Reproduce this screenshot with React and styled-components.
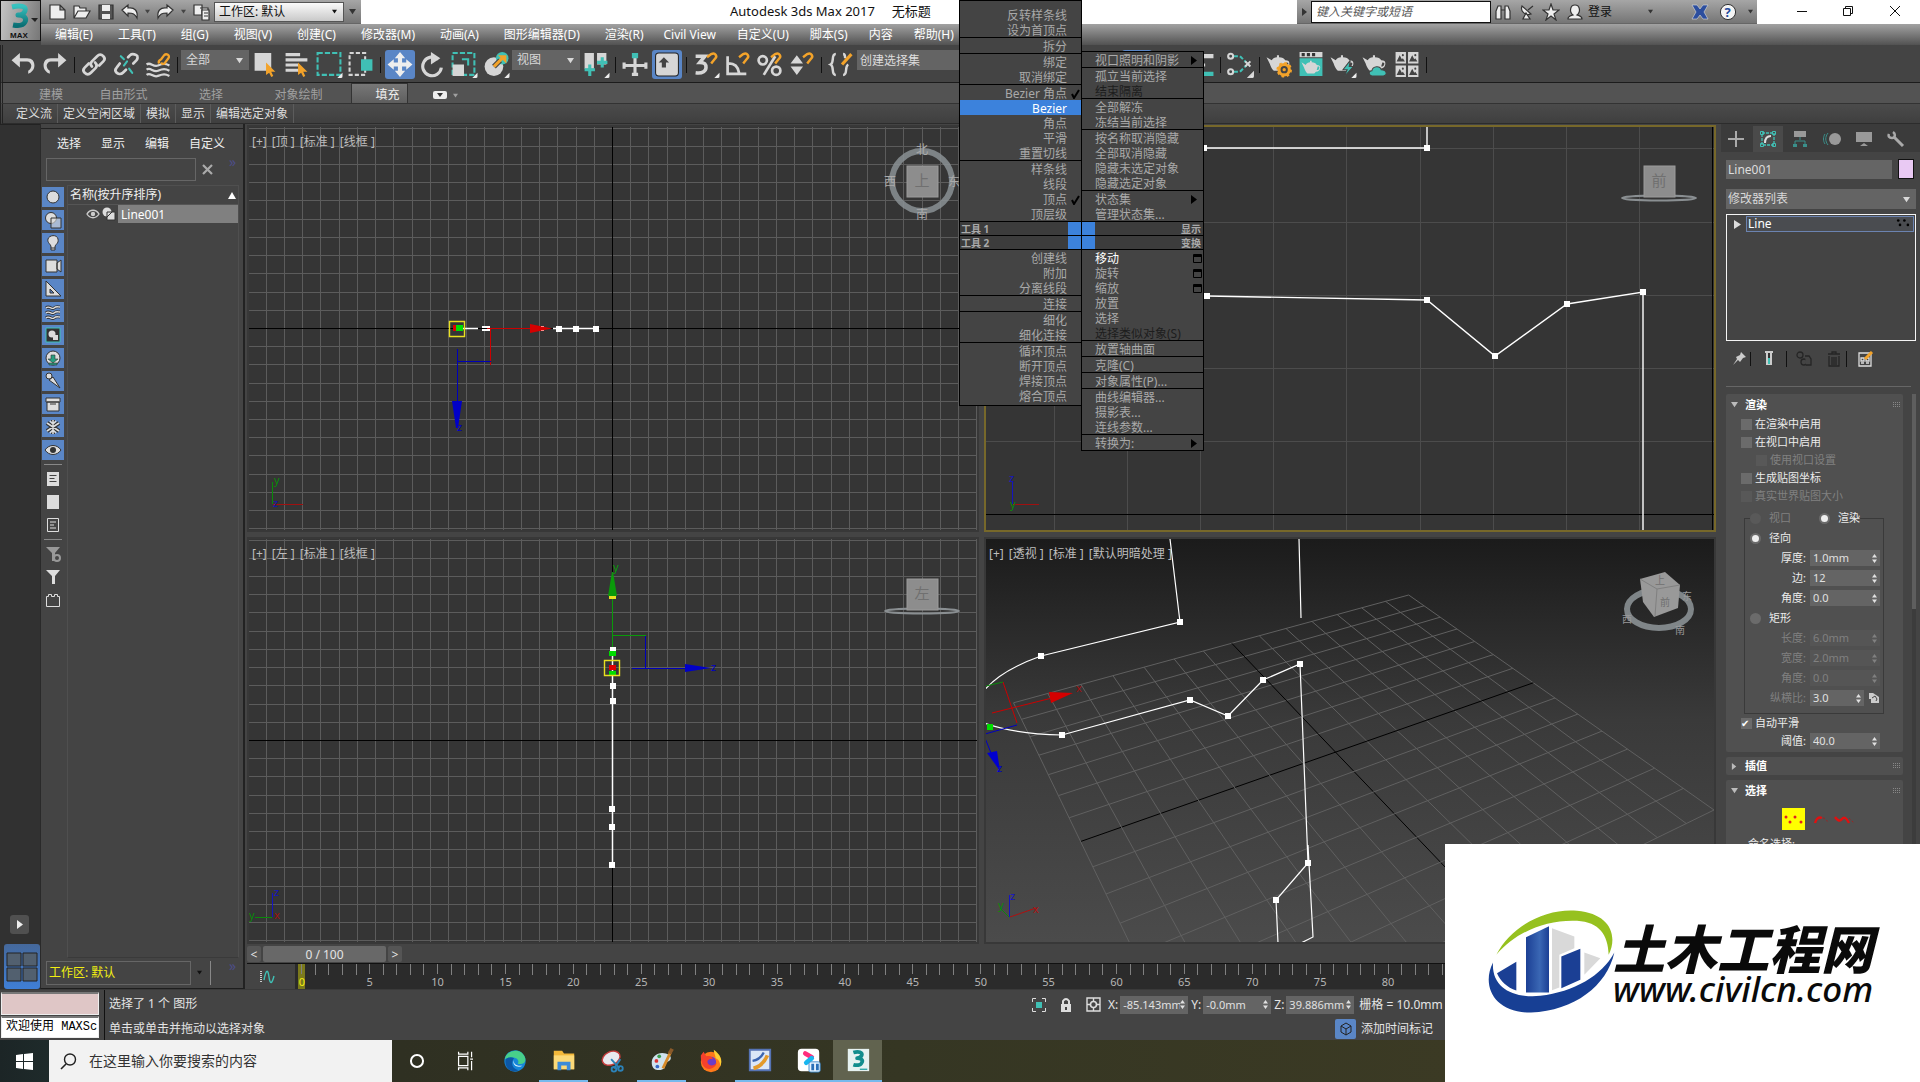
import React, { useState } from 'react';

import styled, { createGlobalStyle } from 'styled-components';

const TEAL = '#40c0b5';
const LIGHT = '#d6d6d6';
const ORANGE = '#f3a32a';
const BLUE = '#5a86c6';

const GlobalStyle = createGlobalStyle`
    * { box-sizing : border-box; }
    body {
        margin : 0;
        background : #444;
        color : #e4e4e4;
        font : 12px/16px "Noto Sans", "Noto Sans CJK SC", sans-serif;
        overflow : hidden;
    }
    button, input, select { font : inherit; color : inherit; margin : 0; padding : 0; border : 0; border-radius : 0; }
    button { background : none; }
    a { color : inherit; text-decoration : none; }
    svg { display : block; flex : none; }
`;

const Page = styled.div`
    display : flex;
    flex-direction : column;
    height : 100vh;
    position : relative;
    overflow : hidden;
`;

/* ---------- icons ---------- */

const teapot = (
    <path fill={LIGHT} d="M1 6l5 3c1-2 3-3 5-3V4h2v2c3 0 5 1 6 3 3 0 4 1 4 3 0 3-2 5-5 5l-2 2H8c-2-2-3-4-4-7zM20 11c0 1-1 3-1 4 2 0 3-1 3-3 0-1-1-1-2-1z" />
);
const magnet = <path fill="none" stroke={ORANGE} strokeWidth="2.4" d="M14 6l4-3c4-2 6 2 4 4l-4 5" />;
const cursor = <path fill={ORANGE} d="M14 11l9 9-4 0 2 4-2 1-2-4-3 2z" />;
const corner = <path fill="#eee" d="M26 21v5h-5z" />;

const ICONS = {
    undo: <path fill={LIGHT} d="M2 9l8-7v5h7c5 0 7 3 7 7s-3 7-6 8v-3c2-1 3-3 3-5s-2-4-4-4h-7v6z" />,
    redo: <path fill={LIGHT} d="M24 9l-8-7v5H9c-5 0-7 3-7 7s3 7 6 8v-3c-2-1-3-3-3-5s2-4 4-4h7v6z" />,
    link: (
        <g fill="none" stroke={LIGHT} strokeWidth="2.6" strokeLinecap="round">
            <path d="M11 15c-2-2-1-4 0-5l5-5c2-2 4-2 6 0s1 4 0 5l-4 4" />
            <path d="M14 11c2 2 2 4 0 6l-4 4c-2 2-4 2-6 0s-1-4 0-5l4-4" />
        </g>
    ),
    unlink: (
        <g fill="none" strokeWidth="2.6" strokeLinecap="round">
            <path stroke={LIGHT} d="M15 6l2-2c2-2 4-1 6 0s1 4 0 5l-3 3M7 12l-3 4c-2 2-1 4 0 5s4 2 6 0l3-3" />
            <path stroke={TEAL} strokeWidth="2" d="M8 5l3 3M16 17l3 4M14 10l-3 4" />
        </g>
    ),
    bind: (
        <g fill="none" strokeWidth="2.2">
            <path stroke={LIGHT} d="M2 13c4-3 6 3 11 1s7-2 11 0M2 18c4-3 6 3 11 1s7-2 11 0M2 23c4-3 6 3 11 1s7-2 11 0" />
            <path stroke={ORANGE} d="M14 12c-1-2 0-3 2-4l3-4c2-2 6 0 4 3l-3 4c-1 2-3 2-4 0" />
        </g>
    ),
    pick: <g><path fill={LIGHT} d="M3 2h16v17H3z" />{cursor}</g>,
    pickName: <g><path fill={LIGHT} d="M2 2h14v3H2zM2 7h21v3H2zM2 12h12v3H2zM2 17h14v3H2z" />{cursor}</g>,
    region: <g><path fill="none" stroke={TEAL} strokeWidth="2" strokeDasharray="5 2" d="M2 2h22v21H2z" />{corner}</g>,
    crossing: (
        <g>
            <path fill="none" stroke={LIGHT} strokeWidth="2" strokeDasharray="4 2" d="M2 2h15v21H2z" />
            <path fill={TEAL} d="M13 8h11v11H13z" />
        </g>
    ),
    move: <path fill="#eee" d="M13 1l5 6h-3v4h4V8l6 5-6 5v-3h-4v4h3l-5 6-5-6h3v-4H7v3l-6-5 6-5v3h4V7H8z" />,
    rotate: <g><path fill="none" stroke={LIGHT} strokeWidth="3" d="M19 8a9 9 0 1 0 3 8" /><path fill={LIGHT} d="M12 1l9 6-9 6z" /></g>,
    scale: (
        <g>
            <path fill="none" stroke={TEAL} strokeWidth="2" strokeDasharray="5 2" d="M2 2h21v21H2z" />
            <path fill={LIGHT} d="M2 13h11v11H2z" />
            <path fill="none" stroke={TEAL} strokeWidth="2" d="M11 8h6v6" />
            {corner}
        </g>
    ),
    place: (
        <g>
            <circle cx="11" cy="15" r="9" fill={LIGHT} />
            <circle cx="19" cy="7" r="6" fill={TEAL} />
            <path stroke="#444" strokeWidth="5" d="M11 15l6-6" />
            <path stroke={ORANGE} strokeWidth="3" d="M11 15l8-8" />
            <path fill={ORANGE} d="M15 4h8v8z" />
            {corner}
        </g>
    ),
    pivot: (
        <g>
            <path fill={LIGHT} d="M2 2h9v15H2zM14 2h9v11h-9z" />
            <path stroke={TEAL} strokeWidth="3" d="M7 13v11M2 18h10M19 6v10M14 11h10" />
            {corner}
        </g>
    ),
    manipulate: (
        <g>
            <path stroke={LIGHT} strokeWidth="3" d="M13 5v18M2 14h22" />
            <path fill={TEAL} d="M10 2h6v5h-6z" />
            <path fill={LIGHT} d="M1 11h3v6H1zM22 11h3v6h-3zM10 21h6v3h-6z" />
        </g>
    ),
    keyboard: (
        <g>
            <rect x="2" y="2" width="22" height="22" rx="3" fill={LIGHT} stroke="#222" />
            <path fill="#444" d="M10 6l5 5h-3v5H8v-5H5z" />
        </g>
    ),
    snap3: <g><path fill="none" stroke={LIGHT} strokeWidth="3.4" d="M3 5h9l-5 6c5 0 6 2 6 5s-3 6-10 5" />{magnet}{corner}</g>,
    snapAngle: <g><path fill="none" stroke={LIGHT} strokeWidth="2.6" d="M3 5v17h18M4 12c6 0 9 3 10 9" />{magnet}</g>,
    snapPercent: (
        <g fill="none" stroke={LIGHT} strokeWidth="2.6">
            <circle cx="6" cy="9" r="4" /><circle cx="19" cy="19" r="4" /><path d="M18 5L7 23" />{magnet}
        </g>
    ),
    snapSpin: <g><path fill={LIGHT} d="M2 12l6-8 6 8zM2 15h12l-6 8z" />{magnet}</g>,
    sets: (
        <g fill="none" stroke={LIGHT} strokeWidth="2.4">
            <path d="M8 3c-5 0-1 8-5 10 4 2 0 10 5 10M15 3c2 0 2 2 2 4M15 23c5 0 1-8 5-10" />
            <path stroke={ORANGE} strokeWidth="3" d="M14 13l9-10" />
        </g>
    ),
    mirror: <path fill={LIGHT} d="M2 5h8v16H2zM16 5h8v16h-8z" />,
    layers: <g><path fill={LIGHT} d="M3 3h22v4H3zM3 12h14v3H3z" /><path fill={TEAL} d="M3 20h22v4H3z" /></g>,
    schematic: (
        <g fill="none" stroke={LIGHT} strokeWidth="2">
            <path stroke={TEAL} strokeDasharray="4 2" d="M7 5h6l6 6M7 20h6l6-6" />
            <circle cx="4" cy="5" r="2.4" /><circle cx="4" cy="20" r="2.4" />
            <path d="M18 10l5 5M23 10l-5 5" />
            {corner}
        </g>
    ),
    renderSetup: (
        <g>
            {teapot}
            <circle cx="18" cy="18" r="5" fill="#444" stroke={ORANGE} strokeWidth="3" />
            <circle cx="18" cy="18" r="6.5" fill="none" stroke={ORANGE} strokeWidth="2" strokeDasharray="2.5 2.6" />
            <circle cx="18" cy="18" r="1.6" fill={ORANGE} />
        </g>
    ),
    renderFrame: (
        <g>
            <path fill={LIGHT} d="M2 1h22v5H2z" />
            <path fill="#333" d="M4 2h3v3H4zM9 2h3v3H9zM14 2h3v3h-3z" />
            <path fill={TEAL} d="M2 7h22v17H2z" />
            <g transform="translate(3 6) scale(.82)">{teapot}</g>
        </g>
    ),
    render: <g>{teapot}<path fill={TEAL} stroke="#444" d="M20 9l-7 9h4l-3 7 9-10h-4z" />{corner}</g>,
    renderCloud: <g>{teapot}<path fill={TEAL} stroke="#444" d="M10 24c-4-1-3-5 0-5 1-5 8-5 9-1 6 0 6 6 2 6z" /></g>,
    gallery: (
        <g fill={LIGHT}>
            {[[2, 1], [14, 1], [2, 14], [14, 14]].map(([x, y]) => (
                <g key={`${x}${y}`} transform={`translate(${x} ${y})`}>
                    <path d="M0 0h10v11H0z" />
                    <path fill="#444" d="M1 9l3-6 2 4 1-1 2 3z" />
                    <circle cx="7" cy="3" r="1" fill="#444" />
                </g>
            ))}
        </g>
    ),
};

const Icon = ({ name, size = 28 }) => (
    <svg width={size} height={size} viewBox="0 0 26 26" aria-hidden="true">{ICONS[name]}</svg>
);

/* ---------- title bar and menus ---------- */

const Head = styled.header`
    display : grid;
    grid-template-columns : 41px 1fr;
    grid-template-rows : 24px 21px;
    flex : none;
`;

const AppButton = styled.button`
    grid-row : 1 / 3;
    border : 1px solid #111;
    background : linear-gradient(100deg, #c4c4c4, #777);
    display : flex;
    align-items : center;
    justify-content : center;
    height : 41px;
`;

const TitleBar = styled.div`
    display : flex;
    background : #fff;
    color : #111;
    min-width : 0;
`;

const Cluster = styled.div`
    display : flex;
    align-items : center;
    background : linear-gradient(#a6a6a6, #757575);
    border-bottom : 1px solid #666;
    padding-left : ${p => p.$pad || 0}px;
`;

const SmallButton = styled.button`
    width : ${p => p.$w || 24}px;
    height : 22px;
    display : flex;
    align-items : center;
    justify-content : center;
    flex : none;
`;

const WindowTitle = styled.h1`
    flex : 1;
    margin : 0;
    padding-left : 369px;
    font-size : 13px;
    line-height : 23px;
    font-weight : 400;
    white-space : pre;
`;

const PickWrap = styled.span`
    display : inline-grid;
    align-items : center;
    width : ${p => p.$w}px;
    height : 20px;
    background : ${p => p.$light ? 'linear-gradient(#fafafa, #c9c9c9)' : '#646464'};
    color : ${p => p.$light ? '#111' : '#d8d8d8'};
    border : ${p => p.$light ? '1px solid #555' : '0'};
    flex : none;
    select {
        grid-area : 1 / 1;
        appearance : none;
        background : none;
        width : 100%;
        padding-left : ${p => p.$light ? 4 : 5}px;
    }
    svg { grid-area : 1 / 1; justify-self : end; margin-right : 6px; pointer-events : none; }
`;

const Caret = ({ size = 7, fill = 'currentColor' }) => (
    <svg width={size} height={size} viewBox="0 0 8 8" aria-hidden="true"><path fill={fill} d="M0 1h8L4 7z" /></svg>
);

const Pick = ({ label, value, ...rest }) => (
    <PickWrap {...rest}>
        <select aria-label={label} defaultValue={value}><option>{value}</option></select>
        <Caret size={rest.$light ? 5 : 7} />
    </PickWrap>
);

const HelpSearch = styled.input`
    width : 180px;
    height : 22px;
    background : #fff;
    border : 1px solid #111;
    padding-left : 4px;
    &::placeholder { color : #555; font-style : italic; opacity : 1; }
`;

const WindowButtons = styled.div`
    display : flex;
    justify-content : space-around;
    width : 163px;
    padding-left : 22px;
    padding-right : 2px;
`;

const MenuBar = styled.nav`
    display : flex;
    gap : 20px;
    padding-left : 14px;
    background : linear-gradient(#a2a2a2, #525252);
    color : #fff;
    line-height : 22px;
    white-space : nowrap;
`;

const MenuGroup = styled.div`
    display : flex;
    gap : ${p => p.$gap}px;
`;

const line = { fill: '#eee', stroke: '#333', strokeWidth: 1.2 };

function Header() {
    return (
        <Head>
            <AppButton aria-label="MAX">
                <svg width="39" height="39" viewBox="0 0 39 39">
                    <defs>
                        <linearGradient id="three" x1="0" y1="0" x2="0" y2="1">
                            <stop offset="0" stopColor="#37c3c0" /><stop offset="1" stopColor="#0b6f74" />
                        </linearGradient>
                    </defs>
                    <path fill="none" stroke="url(#three)" strokeWidth="5" strokeLinejoin="round" d="M11 6c8-2 15-1 13 4-1 3-3 4-7 4 6 0 9 3 7 7-2 4-7 4-12 3" />
                    <path fill="#222" d="M30 17h7l-3 4z" />
                    <text x="9" y="37" fontSize="8" fontWeight="700" fill="#111" fontFamily="Liberation Sans, sans-serif">MAX</text>
                </svg>
            </AppButton>
            <TitleBar>
                <Cluster $pad={5}>
                    <SmallButton aria-label="新建"><svg width="18" height="18" viewBox="0 0 18 18"><path {...line} d="M1 2h10l5 5v9H1zM11 2v5h5" /></svg></SmallButton>
                    <SmallButton aria-label="打开"><svg width="18" height="18" viewBox="0 0 18 18"><path {...line} d="M1 15V3h5l1 2h6v3h4l-4 7zM1 15l4-7h8" /></svg></SmallButton>
                    <SmallButton aria-label="保存"><svg width="18" height="18" viewBox="0 0 18 18"><path {...line} fill="#555" d="M2 2h14v14H2z" /><path fill="#eee" d="M5 2h8v6H5zM5 11h8v5H5z" /></svg></SmallButton>
                    <SmallButton aria-label="撤消"><svg width="18" height="18" viewBox="0 0 18 18"><path {...line} d="M1 7l6-5v3c7-1 10 3 9 10-2-4-4-5-9-5v3z" /></svg></SmallButton>
                    <SmallButton $w={11} aria-label="撤消列表"><Caret size={5} fill="#444" /></SmallButton>
                    <SmallButton aria-label="重做"><svg width="18" height="18" viewBox="0 0 18 18"><path {...line} d="M17 7l-6-5v3C4 4 1 8 2 15c2-4 4-5 9-5v3z" /></svg></SmallButton>
                    <SmallButton $w={13} aria-label="重做列表"><Caret size={5} fill="#444" /></SmallButton>
                    <SmallButton aria-label="项目"><svg width="18" height="18" viewBox="0 0 18 18"><path {...line} d="M1 2h8v10H1zM7 5h8v5" /><path {...line} d="M9 7h7v10H9zM11 10h4M11 13h4" /></svg></SmallButton>
                    <Pick $w={130} $light label="工作区" value="工作区: 默认" />
                    <SmallButton $w={17} aria-label="自定义"><Caret fill="#333" /></SmallButton>
                </Cluster>
                <WindowTitle>Autodesk 3ds Max 2017     无标题</WindowTitle>
                <Cluster>
                    <SmallButton $w={14} aria-label="展开"><svg width="5" height="8"><path fill="#333" d="M0 0l5 4-5 4z" /></svg></SmallButton>
                    <HelpSearch aria-label="搜索帮助" placeholder="键入关键字或短语" />
                    <SmallButton aria-label="查找"><svg width="18" height="18" viewBox="0 0 18 18"><path {...line} d="M2 16V8l2-5h3v13zM16 16V8l-2-5h-3v13zM7 7h4" /></svg></SmallButton>
                    <SmallButton aria-label="通讯"><svg width="18" height="18" viewBox="0 0 18 18"><path {...line} d="M4 3c-2 5 3 10 9 8zM10 7l5-4M5 16h7l-4-6z" /></svg></SmallButton>
                    <SmallButton aria-label="收藏"><svg width="18" height="18" viewBox="0 0 18 18"><path {...line} d="M9 1l2 6h6l-5 4 2 6-5-4-5 4 2-6-5-4h6z" /></svg></SmallButton>
                    <SmallButton aria-label="帐户"><svg width="18" height="18" viewBox="0 0 18 18"><path {...line} d="M2 16c0-3 2-3 5-4-4-3-3-10 2-10s6 7 2 10c3 1 5 1 5 4z" /></svg></SmallButton>
                    <SmallButton $w={26}>登录</SmallButton>
                    <SmallButton $w={74} aria-label="登录选项"><Caret size={5} fill="#333" /></SmallButton>
                    <SmallButton $w={26} aria-label="交换"><svg width="18" height="16" viewBox="0 0 18 16"><path fill="#2c4e9e" stroke="#ddd" strokeWidth=".6" d="M1 1h5l3 4 3-4h5l-4 7 4 7h-5l-3-4-3 4H1l4-7z" /></svg></SmallButton>
                    <SmallButton $w={30} aria-label="帮助">
                        <svg width="18" height="18" viewBox="0 0 18 18"><circle cx="9" cy="9" r="7.6" fill="#f4f4f4" stroke="#333" /><text x="5.6" y="14" fontSize="13" fontWeight="700" fill="#234a9c">?</text></svg>
                    </SmallButton>
                    <SmallButton $w={14} aria-label="帮助列表"><Caret size={5} fill="#333" /></SmallButton>
                </Cluster>
                <WindowButtons>
                    <SmallButton aria-label="最小化"><svg width="12" height="12"><path stroke="#111" d="M1 6.5h10" /></svg></SmallButton>
                    <SmallButton aria-label="还原"><svg width="12" height="12"><path fill="none" stroke="#111" d="M1.500 3.500h7v7h-7zM3.500 3V1.500h7v7H9" /></svg></SmallButton>
                    <SmallButton aria-label="关闭"><svg width="12" height="12"><path stroke="#111" d="M1 1l10 10M11 1L1 11" /></svg></SmallButton>
                </WindowButtons>
            </TitleBar>
            <MenuBar>
                <MenuGroup $gap={25}>
                    {['编辑(E)', '工具(T)', '组(G)', '视图(V)', '创建(C)', '修改器(M)', '动画(A)', '图形编辑器(D)', '渲染(R)'].map(m => <a href="#menu" key={m}>{m}</a>)}
                </MenuGroup>
                <MenuGroup $gap={21}>
                    {['Civil View', '自定义(U)', '脚本(S)', '内容', '帮助(H)'].map(m => <a href="#menu" key={m}>{m}</a>)}
                </MenuGroup>
            </MenuBar>
        </Head>
    );
}

/* ---------- main toolbar and ribbon ---------- */

const ToolRow = styled.div`
    display : flex;
    flex : none;
    height : 38px;
    padding-left : 4px;
    border-bottom : 1px solid #1c1c1c;
    border-left : 3px double #222;
    background : #444;
`;

const ToolButton = styled.button`
    width : 32px;
    height : 37px;
    padding : 4px 1px 3px;
    flex : none;
    display : flex;
    align-items : center;
    justify-content : center;
    svg {
        padding : 1px;
        width : 30px;
        height : 29px;
        border-radius : 3px;
        background : ${p => p.$on ? BLUE : 'none'};
    }
`;

const ToolSep = styled.span`
    width : 7px;
    flex : none;
    &::before { content : ''; display : block; width : 1px; height : 16px; margin : 12px 3px 0; background : #111; }
`;

const ToolField = styled.div`padding-top : 5px; flex : none;`;

const NameSet = styled.input`
    width : 193px;
    height : 20px;
    background : #646464;
    padding-left : 3px;
    flex : none;
    &::placeholder { color : #ddd; opacity : 1; }
`;

const TOOLS = [
    'undo', 'redo', '|', 'link', 'unlink', 'bind', '|', '全部', 'pick', 'pickName', 'region', 'crossing', '|',
    '*move', 'rotate', 'scale', 'place', '视图', 'pivot', '|', 'manipulate', '*keyboard', '|', 'snap3', 'snapAngle',
    'snapPercent', 'snapSpin', '|', 'sets', '#', 'mirror', 'mirror', '|', '*layers', 'layers', 'layers', '|', 'schematic', '|',
    'renderSetup', 'renderFrame', 'render', 'renderCloud', 'gallery',
];

function Toolbar() {
    return (
        <ToolRow role="toolbar">
            {TOOLS.map((t, i) => {
                if (t === '|') return <ToolSep key={i} />;
                if (t === '#') return <ToolField key={i}><NameSet aria-label="命名选择集" placeholder="创建选择集" /></ToolField>;
                if (t === '全部' || t === '视图') return <ToolField key={i}><Pick $w={68} label={t} value={t} /></ToolField>;
                const name = t.replace('*', '');
                return <ToolButton key={i} $on={t[0] === '*'} aria-label={name}><Icon name={name} /></ToolButton>;
            })}
            <ToolSep />
        </ToolRow>
    );
}

const RibbonTabs = styled.div`
    display : flex;
    flex : none;
    height : 21px;
    padding-left : 10px;
    border-left : 3px double #222;
    border-bottom : 1px solid #333;
    background : #535353;
    color : #a0a0a0;
`;

const RibbonTab = styled.button`
    width : ${p => p.$w}px;
    display : flex;
    align-items : center;
    justify-content : center;
    gap : 6px;
    padding-top : 3px;
    padding-left : ${p => p.$on ? 16 : 0}px;
    color : ${p => p.$on ? '#f0f0f0' : 'inherit'};
    background : ${p => p.$on ? 'linear-gradient(#777, #5e5e5e)' : 'none'};
    border : 1px solid ${p => p.$on ? '#333' : 'transparent'};
    border-bottom : 0;
`;

const RibbonTools = styled.div`
    display : flex;
    flex : none;
    height : 20px;
    padding-left : 8px;
    border-left : 3px double #222;
    border-bottom : 1px solid #2c2c2c;
    background : linear-gradient(#4b4b4b, #3f3f3f);
    button { padding : 1px 5px 0; line-height : 18px; border-right : 1px solid #5c5c5c; color : #ddd; }
`;

function Ribbon() {
    return (
        <>
            <RibbonTabs>
                <RibbonTab $w={76}>建模</RibbonTab>
                <RibbonTab $w={69}>自由形式</RibbonTab>
                <RibbonTab $w={106}>选择</RibbonTab>
                <RibbonTab $w={69}>对象绘制</RibbonTab>
                <RibbonTab $w={18} aria-hidden="true" />
                <RibbonTab $w={57} $on>填充</RibbonTab>
                <RibbonTab $w={74} aria-label="最小化功能区">
                    <svg width="14" height="10" viewBox="0 0 14 10"><rect y="1" width="14" height="8" rx="2" fill="#eee" /><path fill="#333" d="M4 3h6L7 7z" /></svg>
                    <Caret size={5} />
                </RibbonTab>
            </RibbonTabs>
            <RibbonTools>
                {['定义流', '定义空闲区域', '模拟', '显示', '编辑选定对象'].map(b => <button key={b}>{b}</button>)}
            </RibbonTools>
        </>
    );
}

/* ---------- scene explorer ---------- */

const Main = styled.main`
    flex : 1;
    min-height : 0;
    display : grid;
    grid-template-columns : 40px 205px minmax(0, 1fr) 203px;
`;

const Strip = styled.div`
    display : flex;
    flex-direction : column;
    justify-content : flex-end;
    align-items : flex-end;
    gap : 10px;
    background : #313131;
    border-top : 1px solid #222;
`;

const StripButton = styled.button`
    width : ${p => p.$big ? 36 : 19}px;
    height : ${p => p.$big ? 45 : 19}px;
    margin-right : ${p => p.$big ? 0 : 11}px;
    border-radius : 3px;
    background : ${p => p.$big ? 'linear-gradient(#45689b, #3f7fd6)' : '#505050'};
    display : flex;
    align-items : center;
    justify-content : center;
`;

const Explorer = styled.section`
    display : flex;
    flex-direction : column;
    min-height : 0;
    border-right : 2px solid #222;
    border-left : 1px solid #2a2a2a;
    border-bottom : 1px solid #1e1e1e;
    padding-top : 4px;
`;

const ExplorerMenu = styled.div`
    display : flex;
    gap : 20px;
    padding : 7px 0 6px 16px;
    border-top : 1px solid #222;
    color : #eee;
`;

const ExplorerSearch = styled.div`
    display : flex;
    align-items : flex-start;
    gap : 6px;
    height : 27px;
    padding-left : 5px;
    input { width : 150px; height : 23px; background : #444; border : 1px solid #666; }
    button { width : 13px; height : 23px; display : flex; align-items : center; }
    span { color : #4d4d88; font-size : 14px; line-height : 8px; margin-left : 8px; }
`;

const ExplorerBody = styled.div`
    flex : 1;
    min-height : 0;
    display : flex;
    gap : 3px;
    padding-left : 1px;
`;

const FilterColumn = styled.div`
    width : 22px;
    display : flex;
    flex-direction : column;
    gap : 3px;
    padding-top : 2px;
    hr { width : 18px; margin : 1px auto; border : 0; border-top : 1px solid #888; }
`;

const FilterButton = styled.button`
    width : 22px;
    height : 20px;
    flex : none;
    background : ${p => p.$on ? BLUE : 'none'};
    display : flex;
    align-items : center;
    justify-content : center;
`;

const Tree = styled.div`
    width : 172px;
    border : 1px solid #4f4f4f;
    border-bottom-color : #3a3a3a;
`;

const TreeHead = styled.button`
    display : flex;
    justify-content : space-between;
    align-items : center;
    width : 100%;
    height : 19px;
    padding : 0 2px;
    border-bottom : 1px solid #555;
    color : #f0f0f0;
    white-space : nowrap;
`;

const TreeRow = styled.div`
    display : flex;
    align-items : center;
    gap : 2px;
    height : 18px;
    padding-left : 18px;
    a { flex : 1; height : 18px; line-height : 19px; padding-left : 3px; background : #808080; color : #fff; }
`;

const WorkspaceRow = styled.div`
    display : flex;
    align-items : center;
    gap : 6px;
    height : 30px;
    padding : 0 0 1px 5px;
    color : #f2ee12;
    div { width : 145px; height : 24px; line-height : 22px; border : 1px solid #666; padding-left : 2px; }
    i { width : 1px; height : 24px; background : #888; margin-left : 2px; }
    span { color : #4d4d88; font-size : 14px; margin : 0 0 14px 12px; }
`;

const d = { fill: '#ddd', stroke: '#333', strokeWidth: 1 };
const FILTERS = [
    ['几何体', <circle cx="9" cy="9" r="6" {...d} />],
    ['图形', <g {...d}><circle cx="7" cy="7" r="5.500" /><path fillOpacity=".6" d="M7 7h10v10H7z" /></g>],
    ['灯光', <path {...d} d="M7 13c0-3-4-4-3-8s9-5 10 0-3 5-3 8v3H7zM7 14h4" />],
    ['摄影机', <path {...d} d="M2 3h11v12H2zM13 6l4-3v12l-4-3z" />],
    ['辅助对象', <path {...d} d="M2 1l15 15H2zM6 9v4h4z" />],
    ['空间扭曲', <g fill="none"><path stroke="#333" strokeWidth="3" d="M2 5c3-3 6 2 8 0s4-1 6-1M2 10c3-3 6 2 8 0s4-1 6-1M2 15c3-3 6 2 8 0s4-1 6-1" /><path stroke="#ddd" strokeWidth="1.400" d="M2 5c3-3 6 2 8 0s4-1 6-1M2 10c3-3 6 2 8 0s4-1 6-1M2 15c3-3 6 2 8 0s4-1 6-1" /></g>],
    ['组', <g><path fill="#333" stroke="#40c0b5" d="M2 2h14v14H2z" /><circle cx="8" cy="8" r="3.500" fill="#ddd" /><path fill="#ddd" d="M9 9h5v5H9z" /></g>],
    ['外部参照', <g><circle cx="9" cy="9" r="7" {...d} /><path fill="#2a9f80" stroke="#333" strokeWidth=".6" d="M7 6h4v4h3l-5 4-5-4h3zM5 14h8v2H5z" /></g>],
    ['骨骼', <g {...d}><circle cx="5" cy="4" r="3" /><path d="M5 8l4-3 7 11z" /></g>],
    ['容器', <path {...d} d="M2 3h14v4H2zM3 7h12v9H3zM6 9h6" />],
    ['冻结', <g fill="none"><path stroke="#333" strokeWidth="4" d="M9 2v14M3 5l12 8M15 5L3 13" /><path stroke="#ddd" strokeWidth="1.600" d="M9 2v14M3 5l12 8M15 5L3 13M6 3l3 3 3-3M6 15l3-3 3 3" /></g>],
    ['隐藏', <g><path {...d} d="M1 9c4-6 12-6 16 0-4 6-12 6-16 0z" /><circle cx="9" cy="9" r="3" fill="#333" /></g>],
];
const EXTRA = [
    ['全部', <path fill="#ddd" d="M3 2h12v14H3zM5.500 5v1h7V5zm0 3v1h5V8zm0 3v1h7v-1z" fillRule="evenodd" />],
    ['无', <path fill="#ddd" d="M3 2h12v14H3z" />],
    ['反转', <path fill="none" stroke="#ddd" d="M3.500 2.500h11v13h-11zM6 6h6M6 9h4M6 12h6" />],
];
const FUNNELS = [
    ['筛选设置', <g fill="#999"><path d="M2 2h14l-5 6v8H8V8z" /><circle cx="13" cy="13" r="3" fill="#444" stroke="#999" strokeWidth="2" /></g>],
    ['筛选', <path fill="#ddd" d="M2 2h14l-5 6v8H8V8z" />],
    ['集合', <path fill="none" stroke="#ddd" d="M2.500 5.500h2v-2h3v2h3v-2h3v2h2v10h-13z" />],
];

const Filter = ({ item, on }) => (
    <FilterButton $on={on} aria-label={item[0]}><svg width="18" height="18" viewBox="0 0 18 18">{item[1]}</svg></FilterButton>
);

function SceneExplorer() {
    return (
        <Explorer>
            <ExplorerMenu>
                {['选择', '显示', '编辑', '自定义'].map(m => <a href="#explorer" key={m}>{m}</a>)}
            </ExplorerMenu>
            <ExplorerSearch>
                <input aria-label="查找" />
                <button aria-label="清除"><svg width="11" height="11"><path stroke="#aaa" strokeWidth="2.200" d="M1 1l9 9M10 1l-9 9" /></svg></button>
                <span>»</span>
            </ExplorerSearch>
            <ExplorerBody>
                <FilterColumn>
                    {FILTERS.map(f => <Filter key={f[0]} item={f} on />)}
                    <hr />
                    {EXTRA.map(f => <Filter key={f[0]} item={f} />)}
                    <hr />
                    {FUNNELS.map(f => <Filter key={f[0]} item={f} />)}
                </FilterColumn>
                <Tree>
                    <TreeHead>名称(按升序排序)<svg width="8" height="7"><path fill="#fff" d="M4 0l4 7H0z" /></svg></TreeHead>
                    <TreeRow>
                        <svg width="14" height="12" viewBox="0 0 14 12"><path fill="none" stroke="#ccc" strokeWidth="1.400" d="M1 6c3-5 9-5 12 0-3 5-9 5-12 0z" /><circle cx="7" cy="6" r="2.200" fill="#ccc" /></svg>
                        <svg width="14" height="14" viewBox="0 0 14 14"><circle cx="5" cy="5" r="4.500" fill="#ddd" /><path fill="#ddd" stroke="#333" d="M5 5h8v8H5z" /><path stroke="#333" d="M5 10l5-5" /></svg>
                        <a href="#Line001">Line001</a>
                    </TreeRow>
                </Tree>
            </ExplorerBody>
            <WorkspaceRow>
                <div>工作区: 默认</div>
                <Caret size={5} fill="#111" />
                <i />
                <span>»</span>
            </WorkspaceRow>
        </Explorer>
    );
}

/* ---------- viewports ---------- */

const Stage = styled.section`
    display : flex;
    flex-direction : column;
    min-width : 0;
    padding : 1px 1px 0 2px;
`;

const Quad = styled.div`
    flex : 1;
    min-height : 0;
    display : grid;
    grid-template : 1fr 1fr / 1fr 1fr;
    gap : 5px;
`;

const Pane = styled.div`
    position : relative;
    min-width : 0;
    min-height : 0;
    overflow : hidden;
    border : 2px solid ${p => p.$active ? '#77682a' : '#383838'};
    background : ${p => p.$deep ? 'linear-gradient(#1b1b1b, #3a3a3a 45%, #4b4b4b)' : '#353535'};
    svg { width : 100%; height : 100%; }
`;

const PaneLabel = styled.div`
    position : absolute;
    top : 7px;
    left : 3px;
    color : #bdbdbd;
    display : flex;
    gap : 5px;
`;

const range = (from, to, step) => {
    const list = [];
    for (let v = from; v < to; v += step) list.push(v);
    return list;
};

const Lines = ({ cx, cy, step, x, y, color }) => (
    <g stroke={color} shapeRendering="crispEdges">
        {range(cx - Math.floor((cx - x) / step) * step, x + 1400, step).map(v => <path key={`v${v}`} d={`M${v.toFixed(1)} ${y}V${y + 900}`} />)}
        {range(cy - Math.floor((cy - y) / step) * step, y + 900, step).map(v => <path key={`h${v}`} d={`M${x} ${v.toFixed(1)}H${x + 1400}`} />)}
        <path stroke="#000" strokeWidth="1.500" d={`M${cx} ${y}V${y + 900}M${x} ${cy}H${x + 1400}`} />
    </g>
);

const Knots = ({ at, fill = '#fff' }) => at.map(([x, y]) => (
    <rect key={`${x}-${y}`} x={x - 3} y={y - 3} width="6" height="6" fill={fill} shapeRendering="crispEdges" />
));

const Letter = ({ x, y, fill, children }) => <text x={x} y={y} fill={fill} fontSize="11">{children}</text>;

const FlatCube = ({ x, y, face, ring }) => (
    <g fontSize="12" textAnchor="middle" fill="#707070">
        {ring === 'round'
            ? <circle cx={x} cy={y} r="30" fill="none" stroke="#8a9094" strokeOpacity=".85" strokeWidth="6" />
            : <ellipse cx={x} cy={y + 17} rx="37" ry="2.500" fill="none" stroke="#8a8f92" strokeWidth="2" />}
        <rect x={x - 15} y={y - 15} width="31" height="31" fill="#8d8d8d" stroke="#9b9b9b" />
        <text x={x} y={y + 5} fontSize="15">{face}</text>
        {ring === 'round' && (
            <g fill="#aaa">
                <text x={x} y={y - 27}>北</text><text x={x} y={y + 38}>南</text>
                <text x={x - 32} y={y + 5}>西</text><text x={x + 32} y={y + 5}>东</text>
            </g>
        )}
    </g>
);

// ground plane, 14 x 14 cells seen in perspective
const ground = (u, v) => {
    const w = 1 - 0.01352 * u - 0.02217 * v;
    return `${((1408.7 - 41.93 * u - 16.19 * v) / w).toFixed(1)} ${((595 - 1.8 * u - 2.6 * v) / w).toFixed(1)}`;
};

function Viewports() {
    return (
        <Quad>
            <Pane>
                <svg aria-hidden="true">
                    <g transform="translate(-249 -127)">
                        <Lines cx={612.4} cy={328.4} step={18.22} x={249} y={127} color="#5c5c5c" />
                        <path stroke="#fff" strokeWidth="1.500" d="M460 328.500h18M553 328.500h44" />
                        <path stroke="#c00" d="M487 328.500h45M490.500 328v37" fill="none" />
                        <path fill="#d40000" d="M530 324l22 4.500-22 4.500z" />
                        <path stroke="#0000b8" fill="none" d="M457.500 349v54M457 361.500h34" />
                        <path fill="#0000c8" d="M452 401h10l-4 27h-2z" />
                        <path fill="#fff" d="M482 326h8v2h-8zM482 329h8v2h-8z" />
                        <Knots at={[[559, 328.5], [576, 328.5], [596, 328.5]]} />
                        <path fill="#f88" d="M541 326h3v1h-3zM541 330h3v1h-3z" />
                        <path fill="#0d0" d="M455 325h8v6h-8z" />
                        <path fill="#d00" d="M453 325h3v6h-3z" />
                        <path fill="none" stroke="#e8e020" strokeWidth="1.400" d="M449.500 321.500h15v15h-15z" />
                        <Letter x={457} y={431} fill="#0000c8">z</Letter>
                        <FlatCube x={922} y={181} face="上" ring="round" />
                        <path stroke="#0a8a0a" d="M272.500 504v-22" /><path stroke="#a01010" d="M273 504.500h30" />
                        <Letter x={274} y={484} fill="#0a8a0a">y</Letter><Letter x={273} y={507} fill="#1414b0">z</Letter>
                    </g>
                </svg>
                <PaneLabel><span>[+]</span><span>[顶 ]</span><span>[标准 ]</span><span>[线框 ]</span></PaneLabel>
            </Pane>
            <Pane $active>
                <svg aria-hidden="true">
                    <g transform="translate(-986 -127)">
                        <Lines cx={1712.4} cy={514.4} step={73.1} x={986} y={127} color="#4c4c4c" />
                        <path fill="none" stroke="#fff" strokeWidth="1.400" d="M1120 148h307V127M1100 294l107 2 220 4 68 56 72-52 76-12v245" />
                        <Knots at={[[1204, 148], [1427, 148], [1207, 296], [1427, 300], [1495, 356], [1567, 304], [1643, 292]]} />
                        <FlatCube x={1659} y={181} face="前" />
                        <path stroke="#1414c0" d="M1012.500 504v-22" /><path stroke="#a01010" d="M1013 504.500h26" />
                        <Letter x={1009} y={482} fill="#1414c0">z</Letter><Letter x={1010} y={508} fill="#0a8a0a">y</Letter>
                    </g>
                </svg>
            </Pane>
            <Pane>
                <svg aria-hidden="true">
                    <g transform="translate(-249 -539)">
                        <Lines cx={612.4} cy={740.4} step={18.22} x={249} y={539} color="#5c5c5c" />
                        <path stroke="#fff" strokeWidth="1.500" d="M612.500 648v217" />
                        <path stroke="#0a9a0a" fill="none" d="M612.500 595v54M612 635.500h34" />
                        <path fill="#0a9a0a" d="M608 596l4-24h1l4 24z" /><path fill="#e8e020" d="M609 596h7v3h-7z" />
                        <path stroke="#0000b8" fill="none" d="M645.500 636v32M632 668.500h54" />
                        <path fill="#0000c8" d="M685 664l26 4-26 4z" />
                        <Knots at={[[612.5, 650], [612.5, 686], [612.5, 701], [612, 809], [612, 827], [612, 865]]} />
                        <path fill="#0d0" d="M609 651h7v5h-7zM609 671h7v4h-7z" /><path fill="#d00" d="M609 665h7v5h-7z" />
                        <path fill="none" stroke="#e8e020" strokeWidth="1.400" d="M604.500 660.500h15v15h-15z" />
                        <Letter x={613} y={571} fill="#0a9a0a">y</Letter><Letter x={711} y={671} fill="#0000c8">z</Letter>
                        <FlatCube x={922} y={594} face="左" />
                        <path stroke="#1414c0" d="M272.500 917v-24" /><path stroke="#0a8a0a" d="M255 917.500h17" />
                        <Letter x={274} y={896} fill="#1414c0">z</Letter><Letter x={249} y={919} fill="#0a8a0a">y</Letter><Letter x={274} y={919} fill="#a01010">x</Letter>
                    </g>
                </svg>
                <PaneLabel><span>[+]</span><span>[左 ]</span><span>[标准 ]</span><span>[线框 ]</span></PaneLabel>
            </Pane>
            <Pane $deep>
                <svg aria-hidden="true">
                    <g transform="translate(-986 -539)" fill="none">
                        {range(0, 14.5, 1).map(i => (
                            <path key={i} stroke={i === 7 ? '#000' : '#606060'} d={`M${ground(i, 0)}L${ground(i, 14)}M${ground(0, i)}L${ground(14, i)}`} />
                        ))}
                        <g stroke="#fff" strokeWidth="1.200">
                            <path d="M1170 539l10 83-139 34q-42 15-58 36M1299 539l2 79" />
                            <path d="M984 723q30 11 78 12l128-35 38 16 35-36 37-16 8 199-32 37 2 43M1308 845l5 92-14 7" />
                        </g>
                        <path stroke="#c00" d="M992 713l60-15M1003 682l14 41" /><path fill="#d40000" d="M1049 692l24 1-22 10z" />
                        <path stroke="#0a8a0a" d="M986 686l17-4" /><path stroke="#0000c0" d="M985 734l32-9M985 738l6 15" />
                        <path fill="#0000d0" d="M987 753l10-2 3 20z" /><path fill="#0d0" d="M987 724h6v6h-6z" />
                        <Knots at={[[1180, 622], [1041, 656], [1062, 735], [1190, 700], [1228, 716], [1263, 680], [1300, 664], [1308, 863], [1276, 900]]} />
                        <Letter x={1076} y={692} fill="#a01010">x</Letter><Letter x={997} y={772} fill="#0000d0">z</Letter>
                        <ellipse cx="1659" cy="609" rx="32" ry="19" stroke="#8a9094" strokeOpacity=".9" strokeWidth="6" />
                        <path fill="#999" d="M1640 579l25-7 15 13-2 23-24 9-11-15z" />
                        <path stroke="#808080" d="M1640 579l17 10 23-4M1657 589l-2 27" />
                        <g fontSize="10" fill="#707070"><text x="1655" y="584">上</text><text x="1660" y="606">前</text></g>
                        <g fontSize="10" fill="#999"><text x="1622" y="623">西</text><text x="1675" y="634">南</text><text x="1682" y="600">东</text></g>
                        <path stroke="#1414c0" d="M1009.500 917v-22" /><path stroke="#b01010" d="M1010 917l26-9" /><path stroke="#0a8a0a" d="M1009 917l-9-9" />
                        <Letter x={1010} y={900} fill="#1414c0">z</Letter><Letter x={1033} y={913} fill="#b01010">x</Letter><Letter x={998} y={909} fill="#0a8a0a">y</Letter>
                    </g>
                </svg>
                <PaneLabel><span>[+]</span><span>[透视 ]</span><span>[标准 ]</span><span>[默认明暗处理 ]</span></PaneLabel>
            </Pane>
        </Quad>
    );
}

const SliderRow = styled.div`
    display : flex;
    gap : 2px;
    padding : 2px 0 1px;
    height : 19px;
    button { width : 14px; height : 16px; line-height : 15px; background : #555; border-radius : 2px; }
    button:nth-child(2) { width : 123px; background : #686868; }
`;

const TrackRow = styled.div`
    display : flex;
    height : 26px;
    border-top : 1px solid #111;
    > button { width : 48px; padding-right : 8px; display : flex; align-items : center; justify-content : center; }
`;

const Track = styled.div`
    flex : 1;
    min-width : 0;
    display : flex;
    padding-right : 50px;
    background : #2b2b2b;
    font-size : 11px;
    line-height : 15px;
    color : #b5b5b5;
`;

const Frame = styled.div`
    flex : 1 1 0;
    width : 0;
    display : flex;
    flex-direction : column;
    align-items : center;
    color : ${p => p.$now ? '#f2ee12' : 'inherit'};
    background : ${p => p.$now ? 'linear-gradient(90deg, transparent 3px, #7c7a1c 3px, #7c7a1c 10px, transparent 10px)' : 'none'};
    &::before { content : ''; width : 1px; height : 11px; background : #808080; }
`;

function TimeControls() {
    const [frame, setFrame] = useState(0);

    return (
        <>
            <SliderRow>
                <button aria-label="上一帧" onClick={() => setFrame(Math.max(0, frame - 1))}>&lt;</button>
                <button>{frame} / 100</button>
                <button aria-label="下一帧" onClick={() => setFrame(Math.min(100, frame + 1))}>&gt;</button>
            </SliderRow>
            <TrackRow>
                <button aria-label="曲线编辑器">
                    <svg width="16" height="14" viewBox="0 0 16 14"><path stroke="#ccc" strokeDasharray="1 1" strokeWidth="2" d="M2 1v12" /><path fill="none" stroke={TEAL} strokeWidth="1.400" d="M5 10c2-11 4-11 5-3s3 7 5-1" /></svg>
                </button>
                <Track>
                    {range(0, 101, 1).map(f => <Frame key={f} $now={f === frame}>{f % 5 === 0 ? f : ''}</Frame>)}
                </Track>
            </TrackRow>
        </>
    );
}

/* ---------- command panel ---------- */

const Panel = styled.aside`
    min-height : 0;
    overflow : hidden;
    padding-left : 4px;
    color : #ececec;
`;

const PanelTabs = styled.div`
    display : flex;
    gap : 2px;
    padding-top : 2px;
    background : #3b3b3b;
`;

const PanelTab = styled.button`
    width : 30px;
    height : 26px;
    background : ${p => p.$on ? '#4a4a4a' : '#3b3b3b'};
    display : flex;
    align-items : center;
    justify-content : center;
`;

const NameRow = styled.div`
    display : flex;
    align-items : center;
    justify-content : space-between;
    padding : 7px 6px 0 5px;
    input { width : 166px; height : 19px; background : #656565; padding-left : 2px; color : #ddd; }
    button { width : 16px; height : 20px; background : #e9c9f3; border : 1px solid #111; }
`;

const ModifierPick = styled.div`
    padding : 10px 0 5px 5px;
    select { padding-left : 2px; }
`;

const Stack = styled.div`
    width : 190px;
    height : 127px;
    margin-left : 5px;
    padding : 1px;
    border : 1px solid #f4f4f4;
`;

const StackItem = styled.button`
    display : grid;
    grid-template-columns : 18px 1fr 20px;
    align-items : center;
    width : 100%;
    height : 16px;
    text-align : left;
    span { line-height : 14px; border : 1px solid #6b83b0; border-right : 0; background : #4a4c50; padding-left : 1px; color : #fff; }
    svg:last-child { border : 1px solid #6b83b0; border-left : 0; background : #4a4c50; }
    svg:first-child { margin-left : 6px; }
`;

const StackTools = styled.div`
    display : flex;
    align-items : center;
    height : 46px;
    padding : 0 0 10px 1px;
    border-bottom : 1px solid #666;
    margin : 0 9px 7px 5px;
`;

const StackButton = styled.button`
    width : ${p => p.$w}px;
    display : flex;
    justify-content : center;
    border-right : ${p => p.$bar ? '1px solid #111' : '0'};
`;

const Rollouts = styled.div`
    display : flex;
    flex-direction : column;
    gap : 5px;
    width : 195px;
    padding : 0 9px 0 5px;
    border-right : 4px solid #5e5e5e;
    border-image : linear-gradient(#5e5e5e 215px, #3c3c3c 215px) 1;
    font-size : 11px;
`;

const Rollout = styled.section`
    background : #505050;
    border-radius : 2px;
    padding-bottom : ${p => p.$open ? 2 : 0}px;
`;

const RolloutHead = styled.button`
    display : grid;
    grid-template-columns : 14px 1fr 10px;
    align-items : center;
    justify-items : start;
    width : 100%;
    height : ${p => p.$open ? 21 : 18}px;
    padding : 0 0 0 5px;
    font-weight : 700;
    color : #fff;
    svg { color : #bbb; }
`;

const CheckRow = styled.label`
    display : flex;
    align-items : center;
    gap : 3px;
    height : 18px;
    padding-left : ${p => p.$nest ? 30 : 15}px;
    color : ${p => p.$off ? '#808080' : 'inherit'};
    input { appearance : none; width : 11px; height : 11px; background : ${p => p.$off ? '#585858' : '#6b6b6b'}; }
    input:checked::before { content : '✔'; display : block; font-size : 10px; line-height : 11px; color : #fff; }
`;

const Box = styled.fieldset`
    margin : 3px 19px 0 18px;
    padding : 0 0 5px;
    border : 1px solid #3a3a3a;
    min-width : 0;
    legend { display : flex; gap : 28px; padding : 0; margin-left : 5px; height : 20px; background : #505050; }
`;

const RadioRow = styled.label`
    display : flex;
    align-items : center;
    gap : 8px;
    height : 20px;
    color : ${p => p.$off ? '#808080' : 'inherit'};
    padding-left : ${p => p.$in || 0}px;
    input { appearance : none; width : 11px; height : 11px; border-radius : 50%; background : ${p => p.$off ? '#595959' : '#6b6b6b'}; }
    input:checked { background : #eee; border : 2px solid #6b6b6b; }
`;

const FieldRow = styled.label`
    display : grid;
    grid-template-columns : 61px ${p => p.$lock ? 54 : 70}px 1fr;
    column-gap : 4px;
    align-items : center;
    height : ${p => p.$low ? 18 : 20}px;
    margin-left : ${p => p.$low ? 19 : 0}px;
    color : ${p => p.$off ? '#808080' : 'inherit'};
    > span:first-child { text-align : right; white-space : nowrap; color : ${p => p.$lock ? '#808080' : 'inherit'}; }
`;

const SpinBox = styled.span`
    display : flex;
    align-items : center;
    background : ${p => p.$off ? '#555' : '#646464'};
    height : ${p => p.$tall ? 18 : 16}px;
    width : ${p => p.$w ? `${p.$w}px` : 'auto'};
    padding-right : 3px;
    font-size : 11px;
    color : ${p => p.$off ? '#808080' : '#e0e0e0'};
    input { flex : 1; min-width : 0; width : 0; background : none; padding-left : 3px; }
`;

const Arrows = () => (
    <svg width="5" height="9" viewBox="0 0 5 9"><path fill="currentColor" d="M0 3.500L2.500 0 5 3.500zM0 5.500h5L2.500 9z" /></svg>
);

const Spin = ({ value, off, tall, w, label }) => (
    <SpinBox $off={off} $tall={tall} $w={w}><input defaultValue={value} disabled={off} aria-label={label} /><Arrows /></SpinBox>
);

const Field = ({ label, value, off, low, lock }) => (
    <FieldRow $off={off} $low={low} $lock={lock}>
        <span>{label}:</span>
        <Spin value={value} off={off} />
        {lock && <svg width="12" height="12" viewBox="0 0 12 12"><path fill="#ccc" d="M1 1h4l6 4v6H3V7H1z" /><path fill="none" stroke="#444" d="M4 6l3-2 2 3-1 2" /></svg>}
    </FieldRow>
);

const RollHead = ({ open, children }) => (
    <RolloutHead $open={open}>
        <svg width="7" height="7" viewBox="0 0 8 8"><path fill="currentColor" d={open ? 'M0 1h8L4 7z' : 'M1 0v8l5-4z'} /></svg>
        {children}
        <svg width="8" height="6"><path stroke="#888" strokeDasharray="1 1" d="M0 .5h7M0 2.500h7M0 4.500h7" /></svg>
    </RolloutHead>
);

const Selection = styled.div`
    display : flex;
    gap : 8px;
    padding : 7px 0 7px 56px;
`;

const SetBox = styled.fieldset`
    margin : 0 14px 0 17px;
    padding : 0;
    height : 60px;
    border : 1px solid #3a3a3a;
    legend { padding : 0 2px; line-height : 14px; margin-left : 2px; }
`;

function CommandPanel() {
    return (
        <Panel>
            <PanelTabs>
                <PanelTab aria-label="创建"><svg width="18" height="18"><path stroke="#aaa" strokeWidth="2" d="M9 1v16M1 9h16" /></svg></PanelTab>
                <PanelTab $on aria-label="修改"><svg width="18" height="18" viewBox="0 0 18 18"><path fill="none" stroke={TEAL} strokeWidth="1.300" strokeDasharray="3 1" d="M3 3h12v12H3z" /><path fill="none" stroke={TEAL} d="M1.500 1.500h3v3h-3zM13.500 1.500h3v3h-3zM1.500 13.500h3v3h-3zM13.500 13.500h3v3h-3z" /><path fill="none" stroke="#ddd" strokeWidth="2" d="M6 13c0-5 2-7 6-7" /></svg></PanelTab>
                <PanelTab aria-label="层次"><svg width="18" height="18" viewBox="0 0 18 18"><path fill="#999" d="M3 1h12v6H3z" /><path fill="none" stroke="#3a8f8a" d="M9 7v3M4 14v-3h10v3" /><path fill="#3a8f8a" d="M2 14h4v3H2zM12 14h4v3h-4z" /></svg></PanelTab>
                <PanelTab aria-label="运动"><svg width="20" height="18" viewBox="0 0 20 18"><circle cx="13" cy="9" r="6" fill="#999" /><path fill="none" stroke="#3a8f8a" d="M6 3c-3 4-3 8 0 12M3 4c-2 3-2 7 0 10" /></svg></PanelTab>
                <PanelTab aria-label="显示"><svg width="18" height="18" viewBox="0 0 18 18"><path fill="#999" d="M1 2h16v10H1zM5 16h8l-4-3z" /></svg></PanelTab>
                <PanelTab aria-label="实用程序"><svg width="18" height="18" viewBox="0 0 18 18"><path fill="none" stroke="#aaa" strokeWidth="3" d="M7 7l9 9" /><path fill="none" stroke="#aaa" strokeWidth="2.500" d="M6 2c3 2 2 6-1 6S1 6 2 4" /></svg></PanelTab>
            </PanelTabs>
            <NameRow><input aria-label="名称" defaultValue="Line001" /><button aria-label="对象颜色" /></NameRow>
            <ModifierPick><Pick $w={190} label="修改器列表" value="修改器列表" /></ModifierPick>
            <Stack>
                <StackItem>
                    <svg width="7" height="9"><path fill="#ddd" d="M0 0l7 4.500L0 9z" /></svg>
                    <span>Line</span>
                    <svg width="20" height="16" viewBox="0 0 20 16"><g fill="#000"><circle cx="4" cy="4" r="1.500" /><circle cx="11" cy="4" r="1.500" /><circle cx="6" cy="9" r="1.500" /><circle cx="15" cy="9" r="1.500" /></g></svg>
                </StackItem>
            </Stack>
            <StackTools>
                <StackButton $w={24} $bar aria-label="锁定堆栈"><svg width="14" height="14" viewBox="0 0 14 14"><path fill="#ccc" d="M9 0l5 5-3 1-3 4-2-2-5 5 4-6-1-2 4-2z" /></svg></StackButton>
                <StackButton $w={36} $bar aria-label="显示最终结果"><svg width="8" height="16"><path fill="#ccc" d="M0 0h8v2H7v12H1V2H0z" /><path fill="#333" d="M3 2h2v5H3z" /><path fill={TEAL} d="M3 7h2v6H3z" /></svg></StackButton>
                <StackButton $w={34} aria-label="使唯一"><svg width="16" height="16" viewBox="0 0 16 16"><g fill="#444" stroke="#252525" strokeWidth="1.300"><circle cx="4" cy="4" r="3" /><circle cx="8" cy="11" r="3" /><path d="M9 5h4l2 3v6h-5" /></g></svg></StackButton>
                <StackButton $w={26} $bar aria-label="移除修改器"><svg width="14" height="16" viewBox="0 0 14 16"><path fill="none" stroke="#252525" strokeWidth="1.300" d="M1 3h12M5 3V1h4v2M2 5v10h10V5M5 6v8M7 6v8M9 6v8" /></svg></StackButton>
                <StackButton $w={38} aria-label="配置修改器集"><svg width="16" height="16" viewBox="0 0 16 16"><path fill="none" stroke="#ddd" strokeWidth="1.300" d="M1 2h12v13H1zM3 7h3v3H3zM8 7h3v3H8zM3 12h3M8 12h3" /><path stroke={ORANGE} strokeWidth="3" d="M7 8l7-7" /></svg></StackButton>
            </StackTools>
            <Rollouts>
                <Rollout $open>
                    <RollHead open>渲染</RollHead>
                    <CheckRow><input type="checkbox" />在渲染中启用</CheckRow>
                    <CheckRow><input type="checkbox" />在视口中启用</CheckRow>
                    <CheckRow $nest $off><input type="checkbox" disabled />使用视口设置</CheckRow>
                    <CheckRow><input type="checkbox" />生成贴图坐标</CheckRow>
                    <CheckRow $off><input type="checkbox" disabled />真实世界贴图大小</CheckRow>
                    <Box>
                        <legend>
                            <RadioRow $off><input type="radio" name="target" disabled />视口</RadioRow>
                            <RadioRow><input type="radio" name="target" defaultChecked />渲染</RadioRow>
                        </legend>
                        <RadioRow $in={5}><input type="radio" name="shape" defaultChecked />径向</RadioRow>
                        <Field label="厚度" value="1.0mm" />
                        <Field label="边" value="12" />
                        <Field label="角度" value="0.0" />
                        <RadioRow $in={5}><input type="radio" name="shape" />矩形</RadioRow>
                        <Field label="长度" value="6.0mm" off />
                        <Field label="宽度" value="2.0mm" off />
                        <Field label="角度" value="0.0" off />
                        <Field label="纵横比" value="3.0" lock />
                    </Box>
                    <CheckRow><input type="checkbox" defaultChecked />自动平滑</CheckRow>
                    <Field label="阈值" value="40.0" low />
                </Rollout>
                <Rollout><RollHead>插值</RollHead></Rollout>
                <Rollout $open>
                    <RollHead open>选择</RollHead>
                    <Selection>
                        <svg width="23" height="22"><path fill="#ffff00" d="M0 0h23v22H0z" /><g fill="#e02020"><circle cx="4" cy="9" r="1.500" /><circle cx="8" cy="14" r="1.500" /><circle cx="13" cy="9" r="1.500" /><circle cx="19" cy="14" r="1.500" /></g></svg>
                        <svg width="44" height="22"><path fill="none" stroke="#e01010" strokeWidth="2.400" d="M2 15q2-7 7-5M22 9q4 6 7 2t7 4" /><path fill="none" stroke="#a02020" strokeDasharray="2 2" d="M10 10q3 0 5 5M36 10l5 5" /></svg>
                    </Selection>
                    <SetBox><legend>命名选择:</legend></SetBox>
                </Rollout>
            </Rollouts>
        </Panel>
    );
}

/* ---------- quad menu ---------- */

const Menu = styled.div`
    position : absolute;
    top : 0;
    left : 959px;
    display : grid;
    grid-template-columns : 123px 122px;
    color : #a9a9a9;
`;

const MenuList = styled.div`
    align-self : ${p => p.$end ? 'end' : 'start'};
    margin-left : ${p => p.$right ? -1 : 0}px;
    padding : ${p => p.$pad || '0'};
    border : 1px solid #000;
    border-width : ${p => p.$end ? '1px 1px 0' : '0 1px 1px'};
    background : #444;
`;

const MenuItem = styled.button`
    display : flex;
    align-items : center;
    justify-content : ${p => p.$right ? 'flex-start' : 'flex-end'};
    width : 100%;
    height : ${p => p.$line ? 16 : 15}px;
    padding : ${p => p.$right ? '2px 0 0 13px' : '2px 14px 0 0'};
    border-bottom : ${p => p.$line ? '1px solid #000' : '0'};
    line-height : 13px;
    white-space : nowrap;
    color : ${p => p.$tone || 'inherit'};
    background : ${p => p.$hot ? '#3c82dc' : 'none'};
    svg { margin-left : ${p => p.$right ? 'auto' : '4px'}; margin-right : ${p => p.$right ? `${p.$mark}px` : '-13px'}; }
`;

const MenuTitle = styled.div`
    display : flex;
    align-items : center;
    justify-content : space-between;
    flex-direction : ${p => p.$right ? 'row' : 'row-reverse'};
    height : 14px;
    margin-left : ${p => p.$right ? -1 : 0}px;
    padding-left : ${p => p.$right ? 0 : 1}px;
    padding-right : ${p => p.$right ? 2 : 0}px;
    border : 1px solid #000;
    border-bottom : 0;
    background : #3c3c3c;
    font-size : 10px;
    font-weight : 700;
    line-height : 12px;
    &:nth-child(n+5) { border-bottom : 1px solid #000; height : 15px; }
    i { width : 13px; align-self : stretch; background : #3c82dc; }
`;

// "_" closes a group, "!" dims the item, "*" lights it; trailing sign picks the mark
const TOP_LEFT = ['反转样条线', '设为首顶点_', '拆分_', '绑定', '取消绑定_', 'Bezier 角点✓', 'Bezier@', '角点', '平滑', '重置切线_', '样条线', '线段', '顶点✓', '顶层级'];
const TOP_RIGHT = ['视口照明和阴影>_', '孤立当前选择', '!结束隔离_', '全部解冻', '冻结当前选择_', '按名称取消隐藏', '全部取消隐藏', '隐藏未选定对象', '隐藏选定对象_', '状态集>', '管理状态集...'];
const LOW_LEFT = ['创建线', '附加', '分离线段_', '连接_', '细化', '细化连接_', '循环顶点', '断开顶点', '焊接顶点', '熔合顶点'];
const LOW_RIGHT = ['*移动=', '旋转=', '缩放=', '放置', '选择', '!选择类似对象(S)_', '放置轴曲面_', '克隆(C)_', '对象属性(P)..._', '曲线编辑器...', '摄影表...', '连线参数..._', '转换为:>'];

const tone = text => {
    if (text[0] === '!') return '#1d1d1d';
    if (text[0] === '*' || text.includes('@')) return '#fff';
    return null;
};

const Items = ({ list, right }) => list.map(text => (
    <MenuItem key={text} $right={right} $line={text.endsWith('_')} $hot={text.includes('@')} $tone={tone(text)} $mark={text.includes('=') ? 1 : 6}>
        {text.replace(/[_!*@✓>=]/g, '')}
        {text.includes('✓') && <svg width="9" height="10"><path fill="none" stroke="#000" strokeWidth="2" d="M1 5l2 4 5-8" /></svg>}
        {text.includes('>') && <svg width="6" height="9"><path fill="#000" d="M0 0l6 4.500L0 9z" /></svg>}
        {text.includes('=') && <svg width="9" height="9"><path fill="none" stroke="#000" d="M.5.5h8v8h-8zM0 1.500h9M0 2.500h9" /></svg>}
    </MenuItem>
));

function QuadMenu() {
    return (
        <Menu>
            <MenuList $end $pad="6px 0 0"><Items list={TOP_LEFT} /></MenuList>
            <MenuList $end $right><Items list={TOP_RIGHT} right /></MenuList>
            <MenuTitle><i /><span>工具 1</span></MenuTitle>
            <MenuTitle $right><i /><span>显示</span></MenuTitle>
            <MenuTitle><i /><span>工具 2</span></MenuTitle>
            <MenuTitle $right><i /><span>变换</span></MenuTitle>
            <MenuList $pad="0 0 2px"><Items list={LOW_LEFT} /></MenuList>
            <MenuList $right><Items list={LOW_RIGHT} right /></MenuList>
        </Menu>
    );
}

/* ---------- status bar and taskbar ---------- */

const Status = styled.footer`
    flex : none;
    height : 51px;
    display : flex;
    border-top : 1px solid #3a3a3a;
`;

const Listener = styled.div`
    width : 105px;
    padding : 2px 5px 2px 1px;
    border-right : 1px solid #111;
    display : grid;
    grid-template-rows : 1fr 1fr;
    gap : 1px;
    background : #444;
    input {
        width : 98px;
        padding-left : 4px;
        background : #fff;
        color : #000;
        border : 1px solid #eee;
        border-top : 2px solid #777;
        font-family : "Liberation Mono", "Noto Sans CJK SC", monospace;
    }
    input:first-child { background : #dfc6c6; }
`;

const Prompt = styled.div`
    flex : 1;
    padding : 6px 0 0 4px;
    display : flex;
    flex-direction : column;
    gap : 9px;
`;

const Coords = styled.div`
    width : 893px;
    display : grid;
    grid-template-rows : 29px 20px;
`;

const CoordRow = styled.div`
    display : flex;
    align-items : center;
    gap : 3px;
    white-space : nowrap;
    padding-left : ${p => p.$pad || 0}px;
    label { display : flex; align-items : center; gap : 2px; }
    > span:last-child { margin-left : 2px; }
`;

const CoordIcon = styled.button`
    width : ${p => p.$on ? 21 : 24}px;
    height : 20px;
    display : flex;
    align-items : center;
    justify-content : center;
    border-radius : 2px;
    background : ${p => p.$on ? BLUE : 'none'};
`;

function StatusBar() {
    return (
        <Status>
            <Listener>
                <input aria-label="宏录制器" readOnly />
                <input aria-label="侦听器" defaultValue="欢迎使用 MAXScr" />
            </Listener>
            <Prompt>
                <div>选择了 1 个 图形</div>
                <div>单击或单击并拖动以选择对象</div>
            </Prompt>
            <Coords>
                <CoordRow>
                    <CoordIcon aria-label="孤立"><svg width="14" height="14"><path fill="none" stroke="#ddd" d="M.5 4V.5H4M10 .5h3.500V4M13.500 10v3.500H10M4 13.500H.5V10" /><path fill={TEAL} d="M4 4h6v6H4z" /></svg></CoordIcon>
                    <CoordIcon aria-label="锁定"><svg width="10" height="14"><path fill="#ddd" d="M0 6h10v8H0z" /><path fill="none" stroke="#ddd" strokeWidth="2" d="M2 7V3q3-4 6 0v4" /><path fill="#444" d="M4 9h2v3H4z" /></svg></CoordIcon>
                    <CoordIcon aria-label="绝对模式"><svg width="15" height="15"><path fill="none" stroke="#ddd" strokeWidth="1.400" d="M1 1h13v13H1zM7.500 1v3M7.500 11v3M1 7.500h3M11 7.500h3" /><circle cx="7.500" cy="7.500" r="3" fill="none" stroke="#ddd" strokeWidth="1.600" /></svg></CoordIcon>
                    <label>X: <Spin tall w={68} value="-85.143mm" /></label>
                    <label>Y: <Spin tall w={68} value="-0.0mm" /></label>
                    <label>Z: <Spin tall w={68} value="39.886mm" /></label>
                    <span>栅格 = 10.0mm</span>
                </CoordRow>
                <CoordRow $pad={308}>
                    <CoordIcon $on aria-label="时间标记"><svg width="14" height="14"><path fill="none" stroke="#222" d="M7 1l5 3v6l-5 3-5-3V4zM7 7v6M7 7l5-3M7 7L2 4" /></svg></CoordIcon>
                    <span>添加时间标记</span>
                </CoordRow>
            </Coords>
        </Status>
    );
}

const Taskbar = styled.nav`
    flex : none;
    height : 42px;
    display : flex;
    background : linear-gradient(90deg, #1c2526 0, #1e2a2a 45px, #2f3022 400px, #353623 900px, #3b3a24 1450px);
`;

const TaskButton = styled.button`
    width : 49px;
    height : 42px;
    display : flex;
    align-items : center;
    justify-content : center;
    background : ${p => p.$on ? '#61634f' : 'none'};
    border-bottom : ${p => p.$run ? '2px solid #76b9ed' : '0'};
`;

const TaskSearch = styled.label`
    width : 343px;
    display : flex;
    align-items : center;
    gap : 12px;
    padding-left : 11px;
    background : #f2f2f2;
    input { background : none; font-size : 14px; width : 250px; }
    input::placeholder { color : #333; opacity : 1; }
`;

const TASKS = [
    ['Cortana', 0, <circle cx="14" cy="14" r="6.500" fill="none" stroke="#fff" strokeWidth="2.200" />],
    ['任务视图', 0, <path fill="none" stroke="#fff" strokeWidth="1.300" d="M6 9h10v10H6zM6 4v2.500h10V4M6 24v-2.500h10V24M20 4v6M20 14v10M18.500 12h3" />],
    ['Edge', 0, <g><circle cx="14" cy="14" r="11.500" fill="#1686d8" /><path fill="#48cf8a" d="M3 12C5 1 22-1 25 11c1 6-4 7-8 6 3-6-5-9-14-5z" /><path fill="#0c57a5" d="M4 12c-2 9 6 16 14 12-7-1-9-8-5-13-3-2-7-1-9 1z" /><path fill="#dff4ff" d="M13 13c-1 4 2 7 9 6-4 3-12 0-9-6z" /></g>],
    ['资源管理器', 1, <g><path fill="#f3b83a" d="M3 4h9l2 3h11v17H3z" /><path fill="#fbd978" d="M3 9h22v15H3z" /><path fill="#3b8bd8" d="M7 16h14v9h-4v-5h-6v5H7z" /></g>],
    ['截图', 0, <g><ellipse cx="12" cy="11" rx="10" ry="7" fill="#e8e8ee" stroke="#c43b3b" strokeWidth="1.500" transform="rotate(-25 12 11)" /><path stroke="#2c82b8" strokeWidth="2" d="M12 12l9 10M22 12l-7 10" /><circle cx="15" cy="23" r="2.500" fill="none" stroke="#2c82b8" strokeWidth="2" /><circle cx="22" cy="22" r="2.500" fill="none" stroke="#2c82b8" strokeWidth="2" /></g>],
    ['画图', 1, <g><path fill="#cfe2ee" d="M3 18C2 8 14 3 22 9c3 3 1 6-2 7s-2 3-3 6-13 6-14-4z" /><circle cx="8" cy="15" r="2" fill="#d33" /><circle cx="11" cy="10" r="2" fill="#3a9b4a" /><circle cx="9" cy="21" r="2" fill="#3568c8" /><path stroke="#d68a2a" strokeWidth="3" d="M15 23L23 6" /><path stroke="#8a5a2a" strokeWidth="4" d="M22 7l3-5" /></g>],
    ['Firefox', 0, <g><circle cx="14" cy="15" r="11" fill="#ff7a1a" /><path fill="#ffcf33" d="M17 2c7 5 10 11 7 18 0-5-2-8-5-9 0-3-2-5-2-9z" /><circle cx="14" cy="15" r="5.500" fill="#6d3cc8" /><path fill="#f5412c" d="M3 8l3-4 3 5c4-1 7 1 7 3-5-1-7 2-5 5 2 3 7 2 9-1-1 8-17 12-17-8z" /></g>],
    ['编辑器', 1, <g><path fill="#dbe7f7" stroke="#5573b4" strokeWidth="2" d="M3 3h22v22H3z" /><path fill="none" stroke="#e39a2a" strokeWidth="4" d="M7 23c8-2 12-7 15-14" /><path fill="none" stroke="#3b65b0" strokeWidth="2.500" d="M6 15c6-1 10-5 12-9" /></g>],
    ['优酷', 1, <g><rect x="2" y="2" width="23" height="24" rx="4" fill="#fff" /><path stroke="#ff2e7d" strokeWidth="5" strokeLinecap="round" d="M10 7l7 4" /><path stroke="#18b6f0" strokeWidth="5" strokeLinecap="round" d="M17 12l-6 5" /><rect x="14" y="16" width="12" height="11" rx="2" fill="#e6f3ff" stroke="#3a86c8" /><path stroke="#2a70b8" strokeWidth="3" d="M18 18v7M23 18v7" /></g>],
    ['3ds Max', 2, <g><path fill="#e6f2f1" d="M3 2h23v24H3z" /><path fill="none" stroke="#128d8d" strokeWidth="4" strokeLinejoin="round" d="M9 6c6-2 10 0 9 3-1 2-3 3-5 3 4 0 7 2 5 5-1 3-6 3-9 2" /><path stroke="#3aa" strokeWidth="1.500" d="M16 24h8" /></g>],
];

function WindowsBar() {
    return (
        <Taskbar>
            <TaskButton aria-label="开始"><svg width="17" height="17" viewBox="0 0 17 17"><path fill="#fff" d="M0 2l7-1v7H0zM8 1l9-1v8H8zM0 9h7v7l-7-1zM8 9h9v8l-9-1z" /></svg></TaskButton>
            <TaskSearch>
                <svg width="17" height="17" viewBox="0 0 17 17"><circle cx="10" cy="6.500" r="5.500" fill="none" stroke="#222" strokeWidth="1.400" /><path stroke="#222" strokeWidth="1.600" d="M6 11l-5 5" /></svg>
                <input aria-label="搜索" placeholder="在这里输入你要搜索的内容" />
            </TaskSearch>
            {TASKS.map(([label, state, art]) => (
                <TaskButton key={label} aria-label={label} $run={state > 0} $on={state === 2}>
                    <svg width="26" height="26" viewBox="0 0 28 28">{art}</svg>
                </TaskButton>
            ))}
        </Taskbar>
    );
}

/* ---------- site mark ---------- */

const SiteMark = styled.a`
    position : absolute;
    right : 0;
    bottom : 0;
    width : 475px;
    height : 238px;
    display : flex;
    align-items : center;
    padding : 0 0 4px 42px;
    background : #fff;
    color : #0a0a0a;
`;

const SiteText = styled.span`
    display : grid;
    margin-left : -4px;
    padding-top : 3px;
    white-space : nowrap;
    b { font : italic 900 52px/52px "Noto Sans CJK SC", sans-serif; }
    span { font : italic 500 35px/32px "Noto Sans", sans-serif; }
`;

const SiteLogo = () => (
    <SiteMark href="#civilcn">
        <svg width="130" height="107" viewBox="140 205 390 320" aria-hidden="true">
            <defs>
                <linearGradient id="tower"><stop offset="0" stopColor="#1b3f94" /><stop offset=".6" stopColor="#3a67b4" /><stop offset="1" stopColor="#1b3f94" /></linearGradient>
            </defs>
            <path fill="#96c11f" d="M168 345C215 255 320 205 410 213c95 8 125 70 95 132-2-60-28-98-95-102-90-4-180 30-242 102z" />
            <path fill="#173f94" d="M158 368c-5 75 60 108 142 100 100-12 185-60 222-130-22 100-120 175-250 180-110 2-150-80-114-150z" />
            <path fill="#1b3f94" d="M170 400l58-34v86c-28-10-47-27-58-52zM363 350l57-23v93l-57 25z" />
            <path fill="url(#tower)" d="M257 292l69-33v199h-69z" />
            <path fill="#d9d9d9" d="M335 265l67 25v35l-45 20v98l-22 8zM432 338l48 17-48 50z" />
        </svg>
        <SiteText><b>土木工程网</b><span>www.civilcn.com</span></SiteText>
    </SiteMark>
);

export default function App() {
    return (
        <Page>
            <GlobalStyle />
            <Header />
            <Toolbar />
            <Ribbon />
            <Main>
                <Strip>
                    <StripButton aria-label="播放"><svg width="6" height="9"><path fill="#eee" d="M0 0l6 4.500L0 9z" /></svg></StripButton>
                    <StripButton $big aria-label="视口布局"><svg width="32" height="30"><path fill="#52606f" stroke="#222" d="M1 1h14v13H1zM17 1h14v13H17zM1 16h14v13H1zM17 16h14v13H17z" /></svg></StripButton>
                </Strip>
                <SceneExplorer />
                <Stage>
                    <Viewports />
                    <TimeControls />
                </Stage>
                <CommandPanel />
            </Main>
            <StatusBar />
            <WindowsBar />
            <QuadMenu />
            <SiteLogo />
        </Page>
    );
}
